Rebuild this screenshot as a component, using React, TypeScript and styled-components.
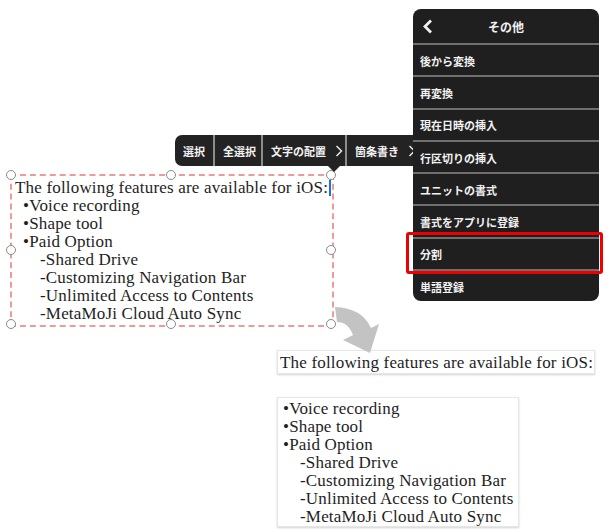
import React from "react";
import styled, { createGlobalStyle } from "styled-components";

const Global = createGlobalStyle`
  html, body { margin: 0; padding: 0; background: #fff; }
  #root { width: 610px; height: 532px; }
`;

const Page = styled.div`
  position: relative;
  width: 610px;
  height: 532px;
  overflow: hidden;
  background: #fff;
  box-sizing: border-box;
  padding: 174px 0 0 10px;
  display: flex;
  flex-direction: column;
`;

const serif = `"Liberation Serif", "Times New Roman", serif`;
const jp = `"Noto Sans CJK JP", "Noto Sans", sans-serif`;

const TextBox = styled.div`
  position: relative;
  width: 324px;
  height: 153px;
  box-sizing: border-box;
  border: 2px dashed #ec9a9a;
  padding: 3px 3px;
  font-family: ${serif};
  font-size: 17px;
  letter-spacing: 0.18px;
  line-height: 18px;
  color: #1e1e1e;
`;

const Line = styled.div<{ $level: number }>`
  padding-left: ${(p) => p.$level}px;
  white-space: nowrap;
`;

const Caret = styled.span`
  display: inline-block;
  width: 2px;
  height: 16px;
  margin-left: 1px;
  background: #1a6fe8;
  vertical-align: -3px;
`;

const Handle = styled.span<{ $x: string; $y: string }>`
  position: absolute;
  left: ${(p) => p.$x};
  top: ${(p) => p.$y};
  width: 10px;
  height: 10px;
  margin: -6px 0 0 -6px;
  box-sizing: border-box;
  border-radius: 50%;
  border: 1px solid #8a8a8a;
  background: #fff;
`;

const Result = styled.div`
  margin: 23px 0 0 267px;
  display: flex;
  flex-direction: column;
  align-items: flex-start;
  gap: 23px;
  font-family: ${serif};
  font-size: 17px;
  letter-spacing: 0.18px;
  line-height: 18px;
  color: #1e1e1e;
`;

const Card = styled.div<{ $w: number; $h: number }>`
  width: ${(p) => p.$w}px;
  height: ${(p) => p.$h}px;
  box-sizing: border-box;
  border: 1px solid #e6e6e6;
  box-shadow: 0 1px 2px rgba(0, 0, 0, 0.18);
  background: #fff;
  padding: 2px 2px;
`;

const HeadingCard = styled(Card)`
  display: flex;
  align-items: center;
  padding-top: 4px;
  white-space: nowrap;
`;

const Toolbar = styled.div`
  position: absolute;
  left: 175px;
  top: 135px;
  height: 31px;
  display: flex;
  align-items: stretch;
  background: #232323;
  border-radius: 7px;
  font-family: ${jp};
  font-weight: 700;
  font-size: 11px;
  color: #f2f2f2;
  z-index: 2;
`;

const ToolItem = styled.div<{ $w: number; $first?: boolean }>`
  width: ${(p) => p.$w}px;
  box-sizing: border-box;
  display: flex;
  align-items: center;
  gap: 9px;
  padding-left: 8px;
  border-left: ${(p) => (p.$first ? "none" : "2px solid #8d8d8d")};
  white-space: nowrap;
`;

const Pointer = styled.span`
  position: absolute;
  left: 153px;
  top: 100%;
  width: 0;
  height: 0;
  border-left: 6px solid transparent;
  border-right: 6px solid transparent;
  border-top: 6px solid #232323;
`;

const Menu = styled.div`
  position: absolute;
  left: 413px;
  top: 9px;
  width: 186px;
  background: #1f1f1f;
  border-radius: 8px;
  font-family: ${jp};
  font-weight: 700;
  color: #f2f2f2;
  z-index: 3;
  display: flex;
  flex-direction: column;
`;

const MenuHeader = styled.div`
  position: relative;
  height: 34px;
  display: flex;
  align-items: center;
  justify-content: center;
  font-size: 12px;
`;

const BackIcon = styled.svg`
  position: absolute;
  left: 9px;
  top: 10px;
`;

const MenuRow = styled.div<{ $hl?: boolean }>`
  position: relative;
  height: 32.3px;
  box-sizing: border-box;
  border-top: 2px solid #6f6f6f;
  display: flex;
  align-items: center;
  padding: 1px 0 0 7px;
  font-size: 11px;

  &::after {
    content: "";
    display: ${(p) => (p.$hl ? "block" : "none")};
    position: absolute;
    left: -7px;
    right: -4px;
    top: -7px;
    bottom: -5px;
    border: 3px solid #ee0000;
    border-radius: 3px;
  }
`;

const CurveArrow = styled.svg`
  position: absolute;
  left: 334px;
  top: 305px;
`;

const Chevron = () => (
  <svg width="8" height="12" viewBox="0 0 8 12">
    <polyline points="1.5,1 6.5,6 1.5,11" fill="none" stroke="#f2f2f2" strokeWidth="1.4" />
  </svg>
);

const items = [
  "後から変換",
  "再変換",
  "現在日時の挿入",
  "行区切りの挿入",
  "ユニットの書式",
  "書式をアプリに登録",
  "分割",
  "単語登録",
];

const lines: [number, string][] = [
  [8, "•Voice recording"],
  [8, "•Shape tool"],
  [8, "•Paid Option"],
  [25, "-Shared Drive"],
  [25, "-Customizing Navigation Bar"],
  [25, "-Unlimited Access to Contents"],
  [25, "-MetaMoJi Cloud Auto Sync"],
];

export default function App() {
  return (
    <>
      <Global />
      <Page>
        <TextBox>
          <Line $level={0}>
            The following features are available for iOS:<Caret />
          </Line>
          {lines.map(([lv, t]) => (
            <Line key={t} $level={lv}>
              {t}
            </Line>
          ))}
          <Handle $x="0%" $y="0%" />
          <Handle $x="50%" $y="0%" />
          <Handle $x="100%" $y="0%" />
          <Handle $x="0%" $y="50%" />
          <Handle $x="100%" $y="50%" />
          <Handle $x="0%" $y="100%" />
          <Handle $x="50%" $y="100%" />
          <Handle $x="100%" $y="100%" />
        </TextBox>

        <Result>
          <HeadingCard $w={318} $h={24}>
            The following features are available for iOS:
          </HeadingCard>
          <Card $w={242} $h={130}>
            {lines.map(([lv, t]) => (
              <Line key={t} $level={lv - 5}>
                {t}
              </Line>
            ))}
          </Card>
        </Result>

        <CurveArrow width="50" height="52" viewBox="0 0 50 52">
          <path
            d="M1 2 Q28 3 37 23 L45 19 L36 48 L9 35 L19 30 Q14 17 3 17 Z"
            fill="#c3c3c3"
          />
        </CurveArrow>

        <Toolbar>
          <ToolItem $w={38} $first>選択</ToolItem>
          <ToolItem $w={48}>全選択</ToolItem>
          <ToolItem $w={84}>
            文字の配置
            <Chevron />
          </ToolItem>
          <ToolItem $w={84}>
            箇条書き
            <Chevron />
          </ToolItem>
          <Pointer />
        </Toolbar>

        <Menu>
          <MenuHeader>
            <BackIcon width="12" height="15" viewBox="0 0 12 15">
              <polyline points="9,1.5 3,7.5 9,13.5" fill="none" stroke="#f2f2f2" strokeWidth="2.8" />
            </BackIcon>
            その他
          </MenuHeader>
          {items.map((t) => (
            <MenuRow key={t} $hl={t === "分割"}>
              {t}
            </MenuRow>
          ))}
        </Menu>
      </Page>
    </>
  );
}
